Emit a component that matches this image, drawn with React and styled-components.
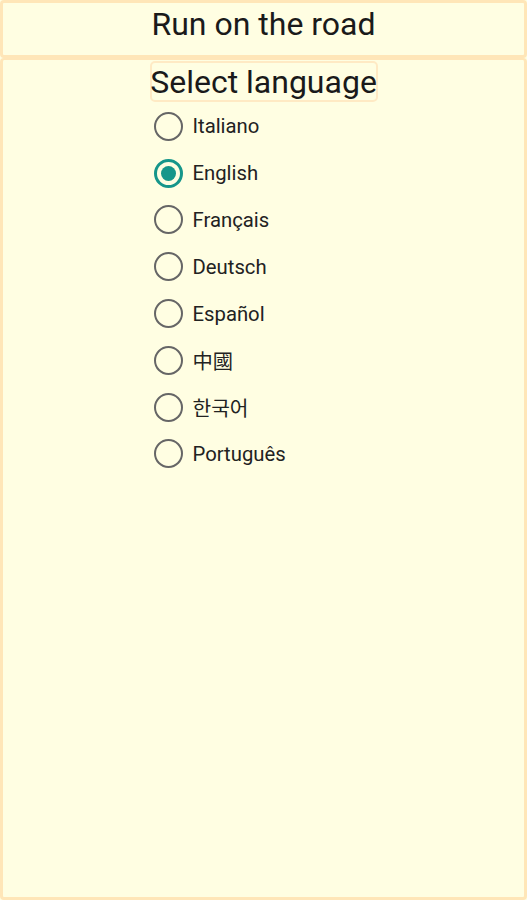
import React, { useState } from 'react'
import styled, { createGlobalStyle } from 'styled-components'

const GlobalStyle = createGlobalStyle`
  html, body {
    margin: 0;
    padding: 0;
    background: #fffee2;
  }
  body {
    font-family: Roboto, "Noto Sans CJK KR", "Noto Sans CJK TC", sans-serif;
    color: #1a1a1a;
  }
`

const Page = styled.div`
  display: flex;
  flex-direction: column;
  height: 900px;
  box-sizing: border-box;
`

const Header = styled.header`
  height: 58px;
  box-sizing: border-box;
  border: 3px solid #ffe6b8;
  border-radius: 4px;
  display: flex;
  justify-content: center;
  align-items: flex-start;
  font-size: 32px;
  line-height: 42px;
`

const Body = styled.main`
  flex: 1;
  box-sizing: border-box;
  border: 3px solid #ffe6b8;
  border-top-width: 2px;
  border-radius: 4px;
  display: flex;
  flex-direction: column;
  align-items: center;
  padding-top: 1px;
`

const Column = styled.div`
  display: flex;
  flex-direction: column;
  width: 228px;
`

const Title = styled.h2`
  margin: 0;
  font-weight: 400;
  font-size: 32px;
  line-height: 36px;
  height: 41px;
  box-sizing: border-box;
  border: 2px solid #ffeac4;
  border-radius: 5px;
  display: flex;
  align-items: center;
  justify-content: center;
  white-space: nowrap;
`

const List = styled.div`
  display: flex;
  flex-direction: column;
  padding: 1px 0 0 4px;
`

const Option = styled.label`
  display: flex;
  align-items: center;
  gap: 10px;
  height: 46.8px;
  font-size: 20.3px;
  color: #222;
  cursor: pointer;
`

const Circle = styled.span`
  width: 29px;
  height: 29px;
  box-sizing: border-box;
  border-radius: 50%;
  border: ${p => (p.$on ? '3px' : '2.5px')} solid ${p => (p.$on ? '#16968a' : '#666')};
  display: flex;
  align-items: center;
  justify-content: center;
  &::after {
    content: '';
    width: 15px;
    height: 15px;
    border-radius: 50%;
    background: #16968a;
    display: ${p => (p.$on ? 'block' : 'none')};
  }
`

const languages = ['Italiano', 'English', 'Français', 'Deutsch', 'Español', '中國', '한국어', 'Português']

export default function App() {
  const [lang, setLang] = useState('English')
  return (
    <Page>
      <GlobalStyle />
      <Header>Run on the road</Header>
      <Body>
        <Column>
          <Title>Select language</Title>
          <List>
            {languages.map(l => (
              <Option key={l} onClick={() => setLang(l)}>
                <Circle $on={lang === l} />
                {l}
              </Option>
            ))}
          </List>
        </Column>
      </Body>
    </Page>
  )
}
